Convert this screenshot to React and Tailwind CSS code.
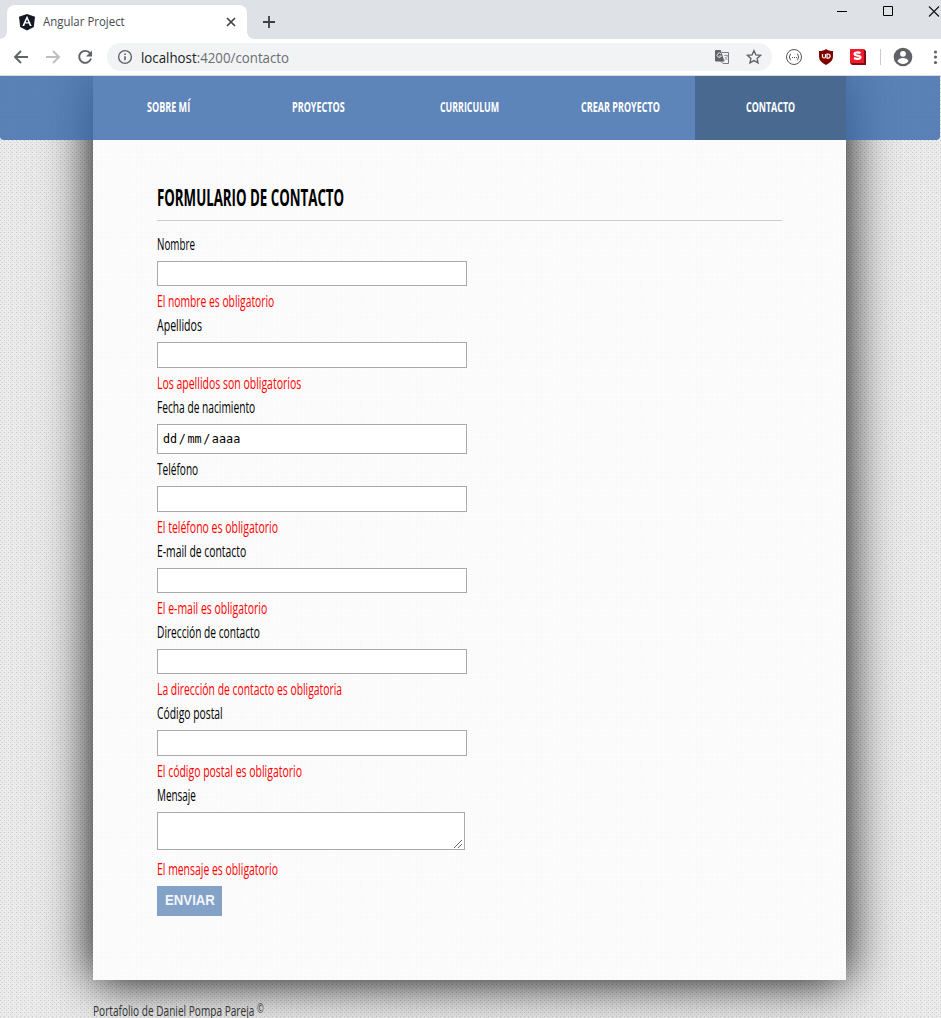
import { useLayoutEffect, useRef } from "react";

function Condensed({ text, width, className = "" }) {
  const ref = useRef(null);
  useLayoutEffect(() => {
    const el = ref.current;
    el.style.transform = `scaleX(${width / el.offsetWidth})`;
  }, [text, width]);
  return (
    <span className="block" style={{ width }}>
      <span ref={ref} className={`inline-block origin-left whitespace-nowrap ${className}`}>{text}</span>
    </span>
  );
}

const nav = [
  ["SOBRE MÍ", 43],
  ["PROYECTOS", 53],
  ["CURRICULUM", 59],
  ["CREAR PROYECTO", 79],
  ["CONTACTO", 49],
];

const fields = [
  { label: "Nombre", lw: 38, h: "h-[25px]", error: "El nombre es obligatorio", ew: 117, row: "h-[81px]" },
  { label: "Apellidos", lw: 45, h: "h-[26px]", error: "Los apellidos son obligatorios", ew: 144, row: "h-[82px]" },
  { label: "Fecha de nacimiento", lw: 98, h: "h-[30px]", date: true, row: "h-[62px]" },
  { label: "Teléfono", lw: 41, h: "h-[26px]", error: "El teléfono es obligatorio", ew: 121, row: "h-[82px]" },
  { label: "E-mail de contacto", lw: 89, h: "h-[25px]", error: "El e-mail es obligatorio", ew: 110, row: "h-[81px]" },
  { label: "Dirección de contacto", lw: 103, h: "h-[25px]", error: "La dirección de contacto es obligatoria", ew: 185, row: "h-[81px]" },
  { label: "Código postal", lw: 66, h: "h-[26px]", error: "El código postal es obligatorio", ew: 145, row: "h-[82px]" },
  { label: "Mensaje", lw: 39, h: "h-[38px]", area: true, error: "El mensaje es obligatorio", ew: 121, row: "h-[103px]" },
];

function TabBar() {
  return (
    <div className="flex h-[39px] bg-[#dee1e6]">
      <div className="mt-8 h-[7px] w-[7px] bg-[radial-gradient(circle_at_0_0,transparent_6.5px,#fff_7px)]" />
      <div className="mt-[5px] flex h-[34px] w-[240px] items-center rounded-t-lg bg-white pl-3">
        <svg width="16" height="18" viewBox="0 0 16 18">
          <path d="M8 1l8 2.800-1.200 10.200L8 17.500l-6.800-3.500L0 3.800z" fill="#151923" />
          <path d="M8 2.800L3.300 13h1.900l1-2.400h3.600l1 2.400h1.900zM8 6.300l1.300 2.900H6.700z" fill="#fff" />
        </svg>
        <span className="ml-2 w-[183px] pb-px text-[12px] text-[#45494d]">
          <Condensed text="Angular Project" width={82} />
        </span>
        <svg width="10" height="10" viewBox="0 0 10 10">
          <path d="M1 1l8 8M9 1L1 9" stroke="#3f4347" strokeWidth="1.700" />
        </svg>
      </div>
      <div className="mt-8 h-[7px] w-[7px] bg-[radial-gradient(circle_at_100%_0,transparent_6.5px,#fff_7px)]" />
      <svg width="12" height="12" viewBox="0 0 12 12" className="mt-4 ml-[9px]">
        <path d="M6 0v12M0 6h12" stroke="#3c4043" strokeWidth="1.800" />
      </svg>
      <div className="mt-[6px] ml-auto flex h-[11px] items-center">
        <svg width="104" height="11" viewBox="0 0 104 11" className="overflow-hidden">
          <path d="M0 5.500h10" stroke="#000" />
          <path d="M46.500.500h9v9h-9z" fill="none" stroke="#000" />
          <path d="M92 .500l10 10M102 .500l-10 10" stroke="#111" strokeWidth="1.100" />
        </svg>
      </div>
    </div>
  );
}

function AddressBar() {
  return (
    <div className="flex h-[37px] items-center border-b border-[#dadce0] bg-white">
      <svg width="94" height="16" viewBox="0 0 94 16" className="shrink-0" fill="none" strokeWidth="1.900">
        <path d="M28 8H15.500M21 2l-6 6 6 6" stroke="#5f6368" />
        <path d="M46 8h13M53 2l6 6-6 6" stroke="#bcbec1" />
        <path d="M90 4.200A6 6 0 1 0 91 9.500" stroke="#5f6368" />
        <path d="M92 1.500v6h-6z" fill="#5f6368" />
      </svg>
      <div className="ml-[13px] flex h-7 w-[665px] shrink-0 items-center rounded-full bg-[#f1f3f4] pl-[10px]">
        <svg width="16" height="16" viewBox="0 0 16 16" fill="none" stroke="#5f6368" strokeWidth="1.400">
          <circle cx="8" cy="8" r="6.400" />
          <path d="M8 7.200v4M8 4.400v1.500" strokeWidth="1.600" />
        </svg>
        <Condensed text={<><span className="text-[#202124]">localhost</span>:4200/contacto</>} width={148} className="ml-2 pb-0.5 text-[14px] text-[#6a6e73]" />
        <svg width="16" height="16" viewBox="0 0 16 16" className="ml-[433px]">
          <path d="M8 3.500h6.500v11H9L6.500 12" fill="none" stroke="#777b80" />
          <path d="M2 1h4.700L10.500 12.500H2a1 1 0 0 1-1-1V2a1 1 0 0 1 1-1z" fill="#5f6368" />
          <path d="M7.200 5A2.200 2.200 0 1 0 7.400 7H5.300" fill="none" stroke="#e1e3e5" />
          <path d="M10 6.500h4M12 5.500v1M13.500 6.500c-.5 2.500-2 4-3 4.500M11 8l2.500 3" fill="none" stroke="#8b8f93" strokeWidth=".8" />
        </svg>
        <svg width="16" height="16" viewBox="0 0 24 24" className="ml-4">
          <path d="M12 2.500l2.900 6.300 6.900.7-5.200 4.600 1.500 6.800L12 17.400l-6.100 3.500 1.500-6.800-5.200-4.600 6.900-.7z" fill="none" stroke="#5f6368" strokeWidth="2" />
        </svg>
      </div>
      <svg width="169" height="24" viewBox="772 0 169 24" className="shrink-0">
        <circle cx="794" cy="12" r="7.500" fill="#fff" stroke="#555" />
        <path d="M791 9c-1.500 0-.7 1.800-1.700 3 1 1.200.2 3 1.700 3M797 9c1.500 0 .7 1.800 1.700 3-1 1.200-.2 3-1.700 3" fill="none" stroke="#555" />
        <path d="M792 12.500h1m1 0h1m1 0h1" stroke="#555" />
        <path d="M826 4c2 1.500 4 2 7 2v5c0 4-2 6.500-7 9-5-2.500-7-5-7-9V6c3 0 5-.5 7-2z" fill="#800000" />
        <path d="M822.500 9v2.500a1.500 1.500 0 0 0 3 0V9" fill="none" stroke="#fff" strokeWidth="1.200" />
        <path d="M827 9h1a2 2 0 0 1 0 4.200h-1z" fill="none" stroke="#fff" strokeWidth="1.200" />
        <path d="M850 4h14l2 2v14h-14l-2-2z" fill="#860b16" />
        <path d="M850 4h14v14h-14z" fill="#ed1c2b" />
        <path d="M860.500 8.200c-2-1.200-6-1.100-6 .8 0 2.300 6 1 6 3.300 0 2-4.500 2-6.500.7" fill="none" stroke="#fff" strokeWidth="2.100" />
        <path d="M880.500 4v16" stroke="#c8cacd" />
        <circle cx="903" cy="12" r="9.300" fill="#5f6368" />
        <circle cx="903" cy="8.800" r="2.900" fill="#fff" />
        <path d="M897.500 16c1.300-4 9.700-4 11 0-2.200 4-8.800 4-11 0z" fill="#fff" />
        <g fill="#5f6368"><circle cx="935.500" cy="7" r="1.600" /><circle cx="935.500" cy="12" r="1.600" /><circle cx="935.500" cy="17.500" r="1.600" /></g>
      </svg>
    </div>
  );
}

function Field({ f }) {
  return (
    <div className={`flex flex-col items-start ${f.row}`}>
      <Condensed text={f.label} width={f.lw} className="h-6 text-[15.5px] leading-[22px] text-black" />
      <div className={`mt-[4px] flex shrink-0 items-center border border-[#a9a9a9] bg-white ${f.h} ${f.area ? "w-[308px] items-end justify-end" : "w-[310px]"}`}>
        {f.date && (
          <Condensed
            text={<>dd<span className="mx-[1.5px]">/</span>mm<span className="mx-[1.5px]">/</span>aaaa</>}
            width={77}
            className="ml-[5px] pb-[4px] font-['DejaVu_Sans_Mono',monospace] text-[11.5px] text-black"
          />
        )}
        {f.area && (
          <svg width="10" height="10" viewBox="0 0 10 10"><path d="M0 9l8-8M4 9l4-4" stroke="#555" strokeWidth=".9" /></svg>
        )}
      </div>
      {f.error && <Condensed text={f.error} width={f.ew} className={`text-[15.5px] leading-[22px] text-[#ff0000] ${f.area ? "mt-[8px]" : "mt-[4px]"}`} />}
    </div>
  );
}

export default function App() {
  return (
    <div className="flex h-[1018px] w-[941px] flex-col overflow-hidden font-['Open_Sans',sans-serif]">
      <TabBar />
      <AddressBar />
      <div className="flex h-[942px] flex-col items-start overflow-hidden bg-[#ececec] bg-[conic-gradient(from_270deg_at_1px_1px,#cbcbcb_90deg,transparent_0),conic-gradient(from_270deg_at_1px_1px,#d3d3d3_90deg,transparent_0),conic-gradient(from_270deg_at_1px_1px,#dedede_90deg,transparent_0),conic-gradient(from_270deg_at_2px_1px,#e1e1e1_90deg,transparent_0)] bg-[size:4px_4px,4px_4px,5px_3px,7px_5px] bg-[position:0_0,2px_2px,1px_0,3px_1px]">
        <main className="ml-[93px] h-[904px] w-[753px] shrink-0 bg-[rgba(255,255,255,0.81)] shadow-[0_0_47px_#000]">
          <nav className="relative z-10 -ml-[93px] flex h-16 w-[940px] rounded-b bg-[rgba(61,108,171,0.83)] pl-[93px]">
            {nav.map(([label, w], i) => (
              <div key={label} className={`flex h-16 w-[150.600px] justify-center pt-[18px] ${i === 4 ? "bg-[#4a6991]" : ""}`}>
                <Condensed text={label} width={w} className="text-[14.5px] leading-6 font-bold text-white" />
              </div>
            ))}
          </nav>
          <div className="px-16">
            <h1 className="flex h-[81px] w-[625px] border-b border-[#ccc] pt-[41px]">
              <Condensed text="FORMULARIO DE CONTACTO" width={187} className="text-[24px] leading-8 font-bold text-black" />
            </h1>
            <form className="flex flex-col pt-[11px]">
              {fields.map((f) => <Field key={f.label} f={f} />)}
              <button type="button" className="flex h-[30px] w-[65px] items-center justify-center bg-[#84a1c7] pb-px font-['Liberation_Sans',sans-serif] text-[14px] font-bold text-[#f2f6fb]">
                <Condensed text="ENVIAR" width={50} />
              </button>
            </form>
          </div>
        </main>
        <footer className="mt-[18px] ml-[93px] flex items-start text-[#333]">
          <Condensed text={<>Portafolio de Daniel Pompa Pareja <span className="align-[3px] text-[12px] leading-none">©</span></>} width={171} className="h-4 text-[15px] leading-4" />
        </footer>
      </div>
    </div>
  );
}
